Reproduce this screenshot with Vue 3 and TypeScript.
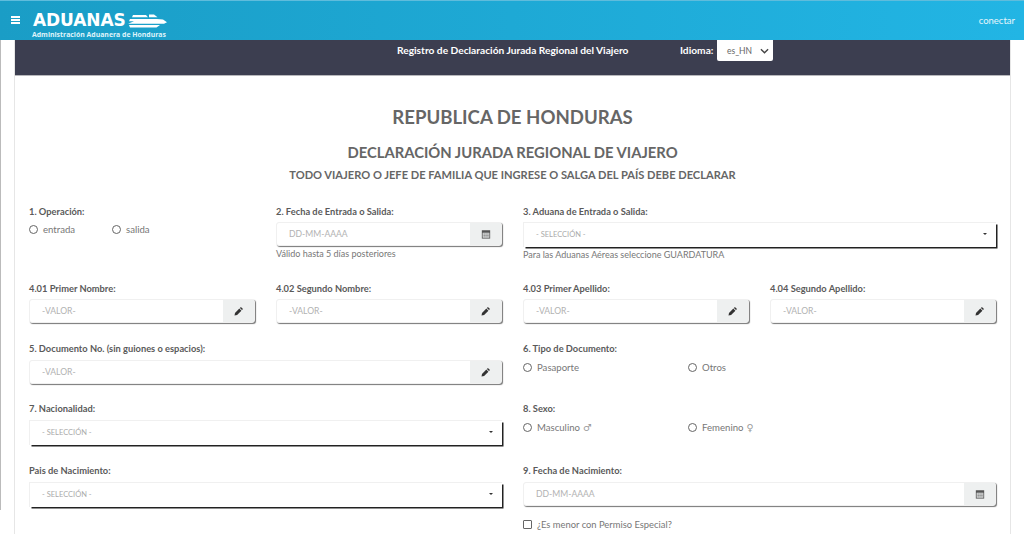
<script setup lang="ts">
const names = [
  { label: '4.01 Primer Nombre:' },
  { label: '4.02 Segundo Nombre:' },
  { label: '4.03 Primer Apellido:' },
  { label: '4.04 Segundo Apellido:' },
]
</script>

<template>
  <div class="page">
    <header class="topbar">
      <button class="burger" aria-label="menu"><i></i><i></i><i></i></button>
      <div class="logo">
        <div class="logo-top">
          <span class="logo-word">ADUANAS</span>
          <svg class="ship" viewBox="0 0 40 14" width="40" height="14">
            <path d="M6 1h13l2 2.2H5z" fill="#fff" />
            <path d="M22 .6h5l3.5 2.6H22z" fill="#fff" />
            <path d="M3 5h27l6 .6 4 2.6-3 1.6H1l6-2.6H2z" fill="#fff" />
            <path d="M2 11h31l-3.5 2.6H3z" fill="#fff" />
          </svg>
        </div>
        <div class="logo-sub">Administración Aduanera de Honduras</div>
      </div>
      <a class="login">conectar</a>
    </header>

    <main class="shell">
      <div class="band">
        <span class="band-title">Registro de Declaración Jurada Regional del Viajero</span>
        <span class="band-lang">Idioma:</span>
        <div class="lang-select">
          <span>es_HN</span>
          <svg viewBox="0 0 10 6" width="9" height="6"><path d="M1 1l4 4 4-4" fill="none" stroke="#444" stroke-width="1.5" /></svg>
        </div>
      </div>

      <section class="card">
        <h1>REPUBLICA DE HONDURAS</h1>
        <h2>DECLARACIÓN JURADA REGIONAL DE VIAJERO</h2>
        <h3>TODO VIAJERO O JEFE DE FAMILIA QUE INGRESE O SALGA DEL PAÍS DEBE DECLARAR</h3>

        <div class="row row-1">
          <div class="field">
            <label>1. Operación:</label>
            <div class="radios op">
              <span class="radio"><i></i>entrada</span>
              <span class="radio"><i></i>salida</span>
            </div>
          </div>
          <div class="field">
            <label>2. Fecha de Entrada o Salida:</label>
            <div class="group">
              <input placeholder="DD-MM-AAAA" />
              <span class="addon">
                <svg viewBox="0 0 12 12" width="10" height="10"><path d="M1 1.5h10v10H1z" fill="#555" /><path d="M2 4.5h8v6H2z" fill="#eef0f0" /><path d="M3 5.5h1.5v1H3zM5.3 5.5h1.5v1H5.3zM7.6 5.5h1.5v1H7.6zM3 7.2h1.5v1H3zM5.3 7.2h1.5v1H5.3zM7.6 7.2h1.5v1H7.6zM3 8.9h1.5v1H3zM5.3 8.9h1.5v1H5.3zM7.6 8.9h1.5v1H7.6z" fill="#555" /></svg>
              </span>
            </div>
            <p class="hint">Válido hasta 5 días posteriores</p>
          </div>
          <div class="field span-2">
            <label>3. Aduana de Entrada o Salida:</label>
            <div class="select">- SELECCIÓN -<b></b></div>
            <p class="hint">Para las Aduanas Aéreas seleccione GUARDATURA</p>
          </div>
        </div>

        <div class="row row-2">
          <div v-for="n in names" :key="n.label" class="field">
            <label>{{ n.label }}</label>
            <div class="group">
              <input placeholder="-VALOR-" />
              <span class="addon">
                <svg viewBox="0 0 12 12" width="10" height="10"><path d="M8.3 1.2l2.5 2.5-1.2 1.2-2.5-2.5zM6.4 3.1l2.5 2.5-5.2 5.2-3.1.6.6-3.1z" fill="#333" /></svg>
              </span>
            </div>
          </div>
        </div>

        <div class="row row-3 tall-label">
          <div class="field span-2">
            <label>5. Documento No. (sin guiones o espacios):</label>
            <div class="group">
              <input placeholder="-VALOR-" />
              <span class="addon">
                <svg viewBox="0 0 12 12" width="10" height="10"><path d="M8.3 1.2l2.5 2.5-1.2 1.2-2.5-2.5zM6.4 3.1l2.5 2.5-5.2 5.2-3.1.6.6-3.1z" fill="#333" /></svg>
              </span>
            </div>
          </div>
          <div class="field span-2">
            <label>6. Tipo de Documento:</label>
            <div class="radios wide">
              <span class="radio"><i></i>Pasaporte</span>
              <span class="radio"><i></i>Otros</span>
            </div>
          </div>
        </div>

        <div class="row row-4 tall-label">
          <div class="field span-2">
            <label>7. Nacionalidad:</label>
            <div class="select">- SELECCIÓN -<b></b></div>
          </div>
          <div class="field span-2">
            <label>8. Sexo:</label>
            <div class="radios wide">
              <span class="radio"><i></i>Masculino <em>♂</em></span>
              <span class="radio"><i></i>Femenino <em>♀</em></span>
            </div>
          </div>
        </div>

        <div class="row row-5 tall-label">
          <div class="field span-2">
            <label>Pais de Nacimiento:</label>
            <div class="select">- SELECCIÓN -<b></b></div>
          </div>
          <div class="field span-2">
            <label>9. Fecha de Nacimiento:</label>
            <div class="group">
              <input placeholder="DD-MM-AAAA" />
              <span class="addon">
                <svg viewBox="0 0 12 12" width="10" height="10"><path d="M1 1.5h10v10H1z" fill="#555" /><path d="M2 4.5h8v6H2z" fill="#eef0f0" /><path d="M3 5.5h1.5v1H3zM5.3 5.5h1.5v1H5.3zM7.6 5.5h1.5v1H7.6zM3 7.2h1.5v1H3zM5.3 7.2h1.5v1H5.3zM7.6 7.2h1.5v1H7.6zM3 8.9h1.5v1H3zM5.3 8.9h1.5v1H5.3zM7.6 8.9h1.5v1H7.6z" fill="#555" /></svg>
              </span>
            </div>
            <div class="check"><i></i>¿Es menor con Permiso Especial?</div>
          </div>
        </div>
      </section>
    </main>
  </div>
</template>

<style>
html, body { margin: 0; background: #fff; overflow: hidden; }
</style>

<style scoped>
.page {
  width: 1024px;
  height: 534px;
  overflow: hidden;
  font-family: "Lato", "Open Sans", sans-serif;
  color: #666;
  font-size: 10px;
}
.topbar {
  height: 39px;
  border-top: 1px solid #5fbcdc;
  background: linear-gradient(90deg, #1a9dc6, #22b5e4);
  display: flex;
  align-items: flex-start;
  color: #fff;
}
.burger {
  width: 9px;
  margin: 15px 0 0 11px;
  padding: 0;
  border: 0;
  background: none;
  display: flex;
  flex-direction: column;
  gap: 1.5px;
}
.burger i { display: block; height: 1.5px; background: #fff; }
.logo { margin: 12px 0 0 13px; width: 140px; }
.logo-top { display: flex; align-items: center; height: 15px; margin-left: 0; }
.logo-word {
  font-family: "DejaVu Sans", sans-serif;
  font-weight: 700;
  font-size: 17px;
  letter-spacing: -0.1px;
  line-height: 15px;
}
.ship { margin: 0 0 0 1px; }
.logo-sub {
  font-family: "Open Sans", sans-serif;
  font-weight: 700;
  font-size: 6.9px;
  line-height: 9px;
  margin: 2px 0 0 -1px;
  white-space: nowrap;
  color: #dff3fa;
}
.login { margin: 13px 9px 0 auto; font-size: 9.5px; line-height: 13px; color: #e6f6fc; }

.shell {
  margin-left: 14px;
  width: 997px;
  height: 495px;
  border-left: 1px solid #e6e6e6;
  border-right: 1px solid #e6e6e6;
  box-sizing: border-box;
  position: relative;
}
.shell::before {
  content: "";
  position: absolute;
  left: -15px;
  top: 0;
  height: 470px;
  width: 1px;
  background: #bbb;
}
.band {
  height: 36px;
  background: #3c3e50;
  border-bottom: 1px solid #b8b8bc;
  box-sizing: border-box;
  display: flex;
  align-items: flex-start;
  color: #fff;
  font-weight: 700;
  font-size: 10.2px;
  line-height: 20px;
}
.band-title { margin-left: 382px; width: 283px; white-space: nowrap; }
.band-lang { width: 37px; }
.lang-select {
  width: 56px;
  height: 21px;
  box-sizing: border-box;
  background: #fff;
  border-radius: 0 0 2px 2px;
  color: #666;
  font-weight: 400;
  font-size: 8.5px;
  display: flex;
  align-items: center;
  justify-content: space-between;
  padding: 0 4px 0 10px;
}
.card { padding: 0 14px; }
h1, h2, h3 { margin: 0; text-align: center; white-space: nowrap; font-weight: 700; }
h1 { margin: 28px 0 0; font-size: 18.6px; line-height: 26px; color: #666; }
h2 { margin: 12px 0 0; font-size: 14.8px; line-height: 20px; color: #666; }
h3 { margin: 5px 0 0; font-size: 11.1px; line-height: 16px; color: #666; }

.row { display: grid; grid-template-columns: repeat(4, 1fr); column-gap: 21px; }
.row-1 { margin-top: 22px; }
.row-2 { margin-top: 21px; }
.row-3 { margin-top: 19px; }
.row-4 { margin-top: 18px; }
.row-5 { margin-top: 19px; }
.span-2 { grid-column: span 2; }

label {
  display: block;
  height: 12px;
  line-height: 14px;
  margin-bottom: 5px;
  font-weight: 700;
  font-size: 9.3px;
  color: #5a5a5a;
  white-space: nowrap;
}
.tall-label label { margin-bottom: 6px; }
.group {
  display: flex;
  height: 24px;
  box-sizing: border-box;
  border: 1px solid #f0f0f0;
  border-radius: 3px;
  box-shadow: 1px 1px 1px #777;
  background: #fff;
}
input {
  flex: 1;
  min-width: 0;
  border: 0;
  outline: 0;
  background: none;
  padding: 0 0 0 12px;
  font: inherit;
  font-size: 8.6px;
}
input::placeholder { color: #b2b2b2; opacity: 1; }
.addon {
  width: 31px;
  background: #eef0f0;
  display: flex;
  align-items: center;
  justify-content: center;
}
.select {
  height: 25px;
  box-sizing: border-box;
  border: 1px solid #f0f0f0;
  border-right: 0;
  border-bottom: 0;
  box-shadow: 2px 2px 0 -0.5px #222;
  background: #fff;
  padding-left: 12px;
  line-height: 23px;
  font-size: 7.5px;
  color: #aaa;
  position: relative;
}
.select b {
  position: absolute;
  right: 9px;
  top: 10px;
  border: 2.5px solid transparent;
  border-top-color: #333;
  border-bottom: 0;
}
.hint { margin: 0; height: 14px; line-height: 16px; font-size: 9px; color: #777; white-space: nowrap; }
.radios { display: flex; height: 14px; align-items: center; }
.radio { display: flex; align-items: center; font-size: 9.6px; color: #777; white-space: nowrap; }
.radio i {
  width: 7px;
  height: 7px;
  border: 1px solid #666;
  border-radius: 50%;
  margin-right: 5px;
}
.op .radio { width: 83px; }
.wide .radio { width: 165px; }
.radio em { font-family: "DejaVu Sans", sans-serif; font-style: normal; margin-left: 3px; color: #999; }
.check { margin-top: 11px; display: flex; align-items: center; font-size: 9.4px; color: #777; height: 14px; white-space: nowrap; }
.check i { width: 7px; height: 7px; border: 1px solid #666; border-radius: 1px; margin-right: 5px; }
</style>
